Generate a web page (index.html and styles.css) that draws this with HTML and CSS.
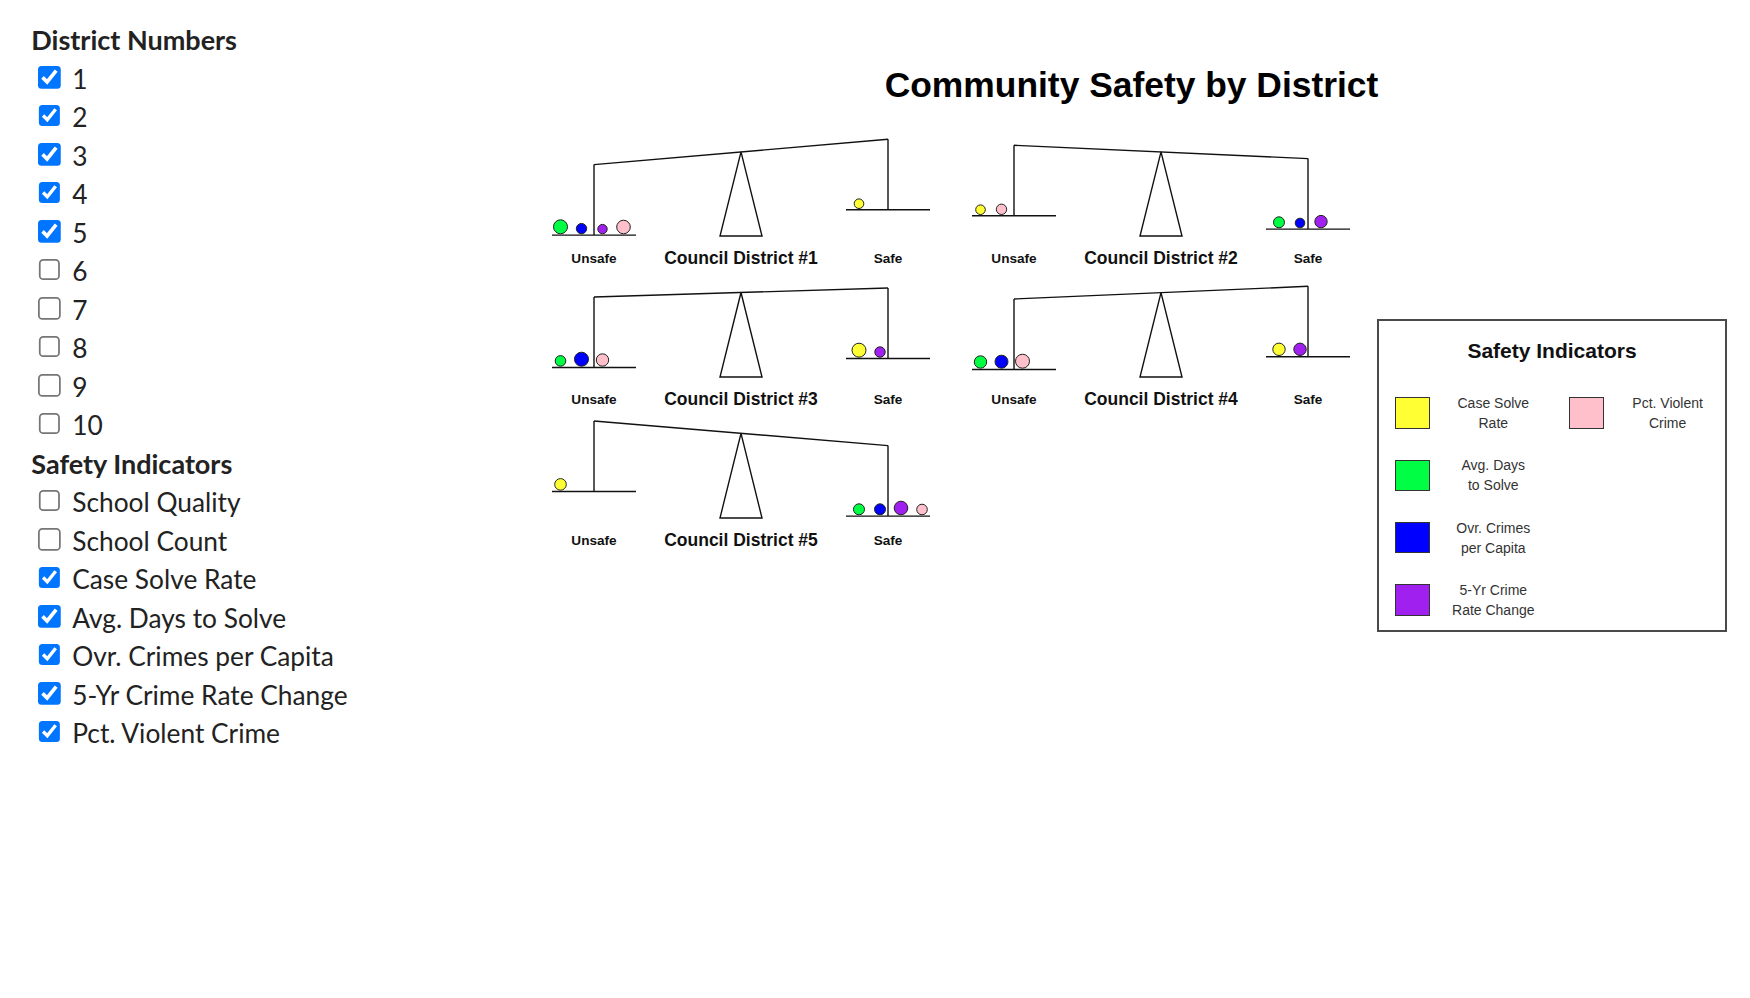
FILE: index.html
```html
<!DOCTYPE html>
<html lang="en">
<head>
    <meta charset="UTF-8">
    <meta name="viewport" content="width=device-width, initial-scale=1.0">
    <title>Community Safety by District</title>
    <link rel="stylesheet" href="styles.css">
</head>
<body>
    <div class="layout">
        <aside class="filters">
            <h2 class="filter-title">District Numbers</h2>
            <label class="option"><input type="checkbox" checked>1</label>
            <label class="option"><input type="checkbox" checked>2</label>
            <label class="option"><input type="checkbox" checked>3</label>
            <label class="option"><input type="checkbox" checked>4</label>
            <label class="option"><input type="checkbox" checked>5</label>
            <label class="option"><input type="checkbox">6</label>
            <label class="option"><input type="checkbox">7</label>
            <label class="option"><input type="checkbox">8</label>
            <label class="option"><input type="checkbox">9</label>
            <label class="option"><input type="checkbox">10</label>

            <h2 class="filter-title">Safety Indicators</h2>
            <label class="option"><input type="checkbox">School Quality</label>
            <label class="option"><input type="checkbox">School Count</label>
            <label class="option"><input type="checkbox" checked>Case Solve Rate</label>
            <label class="option"><input type="checkbox" checked>Avg. Days to Solve</label>
            <label class="option"><input type="checkbox" checked>Ovr. Crimes per Capita</label>
            <label class="option"><input type="checkbox" checked>5-Yr Crime Rate Change</label>
            <label class="option"><input type="checkbox" checked>Pct. Violent Crime</label>
        </aside>

        <main class="chart">
            <h1 class="chart-title">Community Safety by District</h1>
            <div class="chart-body">
                <div class="districts" id="districts"></div>

                <div class="legend">
                    <div class="legend-title">Safety Indicators</div>
                    <div class="legend-grid">
                        <div class="legend-item"><span class="swatch case"></span><span class="legend-text">Case Solve<br>Rate</span></div>
                        <div class="legend-item"><span class="swatch days"></span><span class="legend-text">Avg. Days<br>to Solve</span></div>
                        <div class="legend-item"><span class="swatch crimes"></span><span class="legend-text">Ovr. Crimes<br>per Capita</span></div>
                        <div class="legend-item"><span class="swatch trend"></span><span class="legend-text">5-Yr Crime<br>Rate Change</span></div>
                        <div class="legend-item"><span class="swatch violent"></span><span class="legend-text">Pct. Violent<br>Crime</span></div>
                    </div>
                </div>
            </div>
        </main>
    </div>

    <script>
        const COLORS = {
            case: '#ffff33',
            days: '#00ff44',
            crimes: '#0000ff',
            trend: '#a020f0',
            violent: '#ffc0cb'
        };

        // beam end heights (left / right) and the balls sitting in each pan
        const districts = [
            { n: 1, L: 32.6, R: 7.3,  left: [['days', 7.5], ['crimes', 5.7], ['trend', 5.2], ['violent', 7.3]], right: [['case', 5.3]] },
            { n: 2, L: 13.3, R: 26.6, left: [['case', 5.3], ['violent', 5.7]], right: [['days', 6], ['crimes', 5.3], ['trend', 6.7]] },
            { n: 3, L: 24,   R: 15,   left: [['days', 5.8], ['crimes', 7.5], ['violent', 6.7]], right: [['case', 7.5], ['trend', 5.7]] },
            { n: 4, L: 26,   R: 13.3, left: [['days', 6.7], ['crimes', 7], ['violent', 7.5]], right: [['case', 6.7], ['trend', 6.7]] },
            { n: 5, L: 7,    R: 31.6, left: [['case', 6.3]], right: [['days', 6], ['crimes', 6], ['trend', 7.3], ['violent', 5.8]] }
        ];

        const HANG = 70.5;

        function balls(list, startX, panY) {
            return list.map(([key, r], i) => {
                const cx = startX + i * 21;
                return `<circle cx="${cx}" cy="${panY - r - 0.8}" r="${r - 0.5}" fill="${COLORS[key]}" stroke="#222" stroke-width="1"/>`;
            }).join('');
        }

        function balance(d) {
            const pivotY = (d.L + d.R) / 2;
            const panL = d.L + HANG;
            const panR = d.R + HANG;
            return `
            <svg class="balance" width="420" height="141" viewBox="0 0 420 141">
                <g fill="none" stroke="#111" stroke-width="1.4">
                    <line x1="63" y1="${d.L}" x2="357" y2="${d.R}"/>
                    <line x1="63" y1="${d.L}" x2="63" y2="${panL}"/>
                    <line x1="357" y1="${d.R}" x2="357" y2="${panR}"/>
                    <line x1="21" y1="${panL}" x2="105" y2="${panL}"/>
                    <line x1="315" y1="${panR}" x2="399" y2="${panR}"/>
                    <polygon points="210,${pivotY} 189,104 231,104" fill="#fff"/>
                </g>
                ${balls(d.left, 29.5, panL)}
                ${balls(d.right, 328, panR)}
                <text class="side-label" x="63" y="130.5">Unsafe</text>
                <text class="district-label" x="210" y="131.5">Council District #${d.n}</text>
                <text class="side-label" x="357" y="130.5">Safe</text>
            </svg>`;
        }

        document.getElementById('districts').innerHTML = districts.map(balance).join('');
    </script>
</body>
</html>
```

FILE: styles.css
```css
body {
    margin: 0;
    background: #fff;
    color: #222;
}
.layout {
    display: flex;
    align-items: flex-start;
}

/* filter sidebar */
.filters {
    flex: 0 0 531px;
    box-sizing: border-box;
    padding: 21.4px 0 0 31.3px;
    font-family: Lato, "Open Sans", sans-serif;
    font-size: 26.3px;
    line-height: 38.5px;
}
.filter-title {
    margin: 0;
    font-size: 27px;
    font-weight: 700;
    line-height: 38.5px;
    color: #222;
}
.option {
    display: block;
    height: 38.5px;
    color: #222;
}
.option input {
    zoom: 1.75;
    width: 13px;
    height: 13px;
    margin: 0 6.4px 0 4px;
}

/* chart */
.chart {
    display: flex;
    flex-direction: column;
}
.chart-title {
    width: 1201px;
    margin: 66.4px 0 0;
    font-family: "Liberation Sans", Arial, sans-serif;
    font-size: 35.4px;
    font-weight: 700;
    line-height: 38px;
    text-align: center;
    color: #000;
}
.chart-body {
    display: flex;
    align-items: flex-start;
    margin-top: 27.3px;
}
.districts {
    display: grid;
    grid-template-columns: 420px 420px;
    grid-auto-rows: 141px;
}
.balance {
    display: block;
}
.balance text {
    font-family: "Liberation Sans", Arial, sans-serif;
    font-weight: 700;
    text-anchor: middle;
    fill: #111;
}
.side-label {
    font-size: 13.6px;
}
.district-label {
    font-size: 17.5px;
}

/* legend */
.legend {
    box-sizing: border-box;
    width: 349.4px;
    height: 312.7px;
    margin: 187.3px 0 0 6.3px;
    padding-top: 18px;
    border: 2px solid #4a4a4a;
    font-family: "Liberation Sans", Arial, sans-serif;
}
.legend-title {
    font-size: 21px;
    font-weight: 700;
    line-height: 24px;
    text-align: center;
    color: #111;
}
.legend-grid {
    display: grid;
    grid-template-rows: repeat(4, 40px);
    grid-auto-flow: column;
    grid-auto-columns: 153.3px;
    column-gap: 21px;
    row-gap: 22.3px;
    margin: 30px 0 0 15.7px;
}
.legend-item {
    display: flex;
    align-items: center;
    gap: 8.3px;
}
.swatch {
    flex: 0 0 35px;
    box-sizing: border-box;
    height: 31.3px;
    border: 1.5px solid #333;
}
.swatch.case { background: #ffff33; }
.swatch.days { background: #00ff44; }
.swatch.crimes { background: #0000ff; }
.swatch.trend { background: #a020f0; }
.swatch.violent { background: #ffc0cb; }
.legend-text {
    width: 110px;
    font-size: 14px;
    line-height: 20px;
    text-align: center;
    color: #333;
}
```
